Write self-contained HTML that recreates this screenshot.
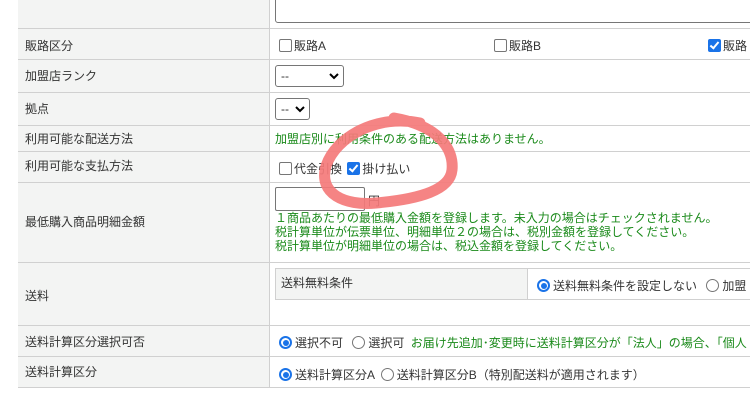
<!DOCTYPE html>
<html><head><meta charset="utf-8"><style>
body{margin:0;width:750px;height:407px;overflow:hidden;background:#fff;font-family:"Liberation Sans","Noto Sans CJK JP",sans-serif;font-size:12px;color:#333;position:relative}
.a{position:absolute;white-space:nowrap}
.lab{position:absolute;left:18px;width:251px;background:#f3f4f3;border-bottom:1px solid #d0d0d0;border-right:1px solid #d0d0d0}
.lab span{position:absolute;left:7px}
.hl{position:absolute;left:269px;right:0;height:1px;background:#d0d0d0}
.g{color:#1a8a1a}
.cb{display:inline-block;width:11px;height:11px;border:1px solid #767676;border-radius:2px;vertical-align:-2px;margin-right:2px;background:#fff}
.cbk{display:inline-block;width:13px;height:13px;border-radius:2px;background:#1a73e8;vertical-align:-2px;margin-right:2px;position:relative}
.cbk:after{content:"";position:absolute;left:4px;top:1px;width:3px;height:7px;border:solid #fff;border-width:0 2px 2px 0;transform:rotate(40deg)}
.rd{display:inline-block;width:11px;height:11px;border:1px solid #767676;border-radius:50%;vertical-align:-2px;margin-right:3px;background:#fff}
.rdk{display:inline-block;width:9px;height:9px;border:2px solid #1a73e8;border-radius:50%;vertical-align:-2px;margin-right:3px;position:relative}
.rdk:after{content:"";position:absolute;left:1.5px;top:1.5px;width:6px;height:6px;border-radius:50%;background:#1a73e8}
.sel{position:absolute;border:1px solid #767676;border-radius:3px;background:#fff;height:20px}
</style></head><body>
<div class="lab" style="top:0;height:28px"></div>
<div class="lab" style="top:29px;height:30px"><span style="top:8px">販路区分</span></div>
<div class="lab" style="top:60px;height:32px"><span style="top:7px">加盟店ランク</span></div>
<div class="lab" style="top:93px;height:32px"><span style="top:7px">拠点</span></div>
<div class="lab" style="top:126px;height:25px"><span style="top:4px">利用可能な配送方法</span></div>
<div class="lab" style="top:152px;height:30px"><span style="top:5px">利用可能な支払方法</span></div>
<div class="lab" style="top:183px;height:79px"><span style="top:30px">最低購入商品明細金額</span></div>
<div class="lab" style="top:263px;height:62px"><span style="top:24px">送料</span></div>
<div class="lab" style="top:326px;height:30px"><span style="top:7px">送料計算区分選択可否</span></div>
<div class="lab" style="top:357px;height:30px"><span style="top:6px">送料計算区分</span></div>
<div class="hl" style="top:28px"></div><div class="hl" style="top:59px"></div><div class="hl" style="top:92px"></div><div class="hl" style="top:125px"></div><div class="hl" style="top:151px"></div><div class="hl" style="top:182px"></div><div class="hl" style="top:262px"></div><div class="hl" style="top:325px"></div><div class="hl" style="top:356px"></div><div class="hl" style="top:387px"></div>
<div style="position:absolute;left:275px;top:-5px;width:480px;height:26px;border:1px solid #767676;border-radius:3px"></div>
<div class="a" style="left:279px;top:37px"><span class="cb"></span>販路A</div>
<div class="a" style="left:494px;top:37px"><span class="cb"></span>販路B</div>
<div class="a" style="left:708px;top:37px"><span class="cbk"></span>販路</div>
<div class="sel" style="left:275px;top:65px;width:67px"><span class="a" style="left:5px;top:3px">--</span><svg class="a" style="left:53px;top:7px" width="10" height="7"><path d="M1 1 L5 5 L9 1" fill="none" stroke="#000" stroke-width="2"/></svg></div>
<div class="sel" style="left:275px;top:98px;width:33px"><span class="a" style="left:5px;top:3px">--</span><svg class="a" style="left:19px;top:7px" width="10" height="7"><path d="M1 1 L5 5 L9 1" fill="none" stroke="#000" stroke-width="2"/></svg></div>
<div class="a g" style="left:275px;top:130px">加盟店別に利用条件のある配送方法はありません。</div>
<div class="a" style="left:279px;top:160px"><span class="cb"></span>代金引換 <span class="cbk" style="margin-left:2px"></span>掛け払い</div>
<div style="position:absolute;left:275px;top:187px;width:88px;height:22px;border:1px solid #767676;border-radius:2px"></div>
<div class="a" style="left:368px;top:192px">円</div>
<div class="a g" style="left:275px;top:211px;line-height:14px">１商品あたりの最低購入金額を登録します。未入力の場合はチェックされません。<br>税計算単位が伝票単位、明細単位２の場合は、税別金額を登録してください。<br>税計算単位が明細単位の場合は、税込金額を登録してください。</div>
<div style="position:absolute;left:275px;top:268px;width:251px;height:30px;background:#f3f4f3;border:1px solid #d0d0d0"></div>
<div style="position:absolute;left:526px;top:268px;width:230px;height:30px;border:1px solid #d0d0d0;border-left:none"></div>
<div class="a" style="left:281px;top:274px">送料無料条件</div>
<div class="a" style="left:537px;top:277px"><span class="rdk"></span>送料無料条件を設定しない <span class="rd" style="margin-left:6px"></span>加盟</div>
<div class="a" style="left:279px;top:334px"><span class="rdk"></span>選択不可 <span class="rd" style="margin-left:6px"></span>選択可 <span class="g" style="margin-left:3px">お届け先追加･変更時に送料計算区分が「法人」の場合、「個人</span></div>
<div class="a" style="left:279px;top:366px"><span class="rdk"></span>送料計算区分A <span class="rd" style="margin-left:3px"></span>送料計算区分B（特別配送料が適用されます）</div>
<svg style="position:absolute;left:0;top:0" width="750" height="407"><path d="M420 123 C378 114,336 136,326 166 C318 194,345 206,376 203 C420 199,450 190,452 170 C454 150,440 126,394 118" fill="none" stroke="#f47a7a" stroke-width="11" stroke-linecap="round" opacity="0.92"/></svg>
</body></html>
